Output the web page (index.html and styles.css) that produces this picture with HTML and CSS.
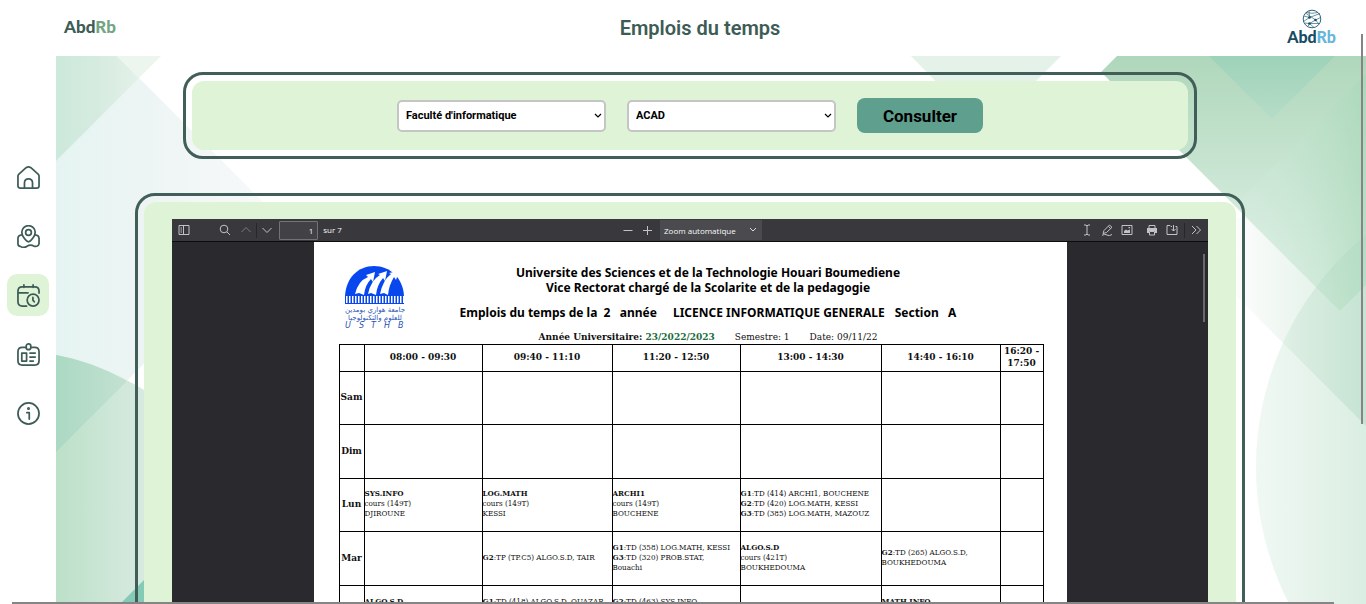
FILE: index.html
```html
<!DOCTYPE html>
<html lang="fr">
<head>
<meta charset="utf-8">
<title>Emplois du temps</title>
<link rel="stylesheet" href="styles.css">
</head>
<body>
<header class="topbar">
  <a class="wordmark" href="#">Abd<span>Rb</span></a>
  <h1>Emplois du temps</h1>
  <a class="brand" href="#">
    <svg width="20" height="20" viewBox="0 0 20 20" fill="none" stroke="#2d647c" stroke-width="1" aria-hidden="true">
      <circle cx="10" cy="10" r="8.8"/>
      <path d="M2 7 7.5 8.5 18 4.5M7.5 8.5 7 1.8M3.5 4 13.5 11 18.5 8.5M1.5 12.500 7.500 8.500M13.500 11 7.500 14.500 2.500 14M7.500 14.500 12 18.500M7.500 14.500 17.500 14.500M13.500 11 17 15M4 3.500Q10 5 16 3.500M7.500 14.500 6 17.500" stroke-width=".7"/>
      <g fill="#174c63" stroke="none"><circle cx="7.500" cy="8.500" r="1.300"/><circle cx="13.500" cy="11" r="1.300"/><circle cx="7.500" cy="14.500" r="1.300"/></g>
    </svg>
    <span class="brand-name">Abd<span>Rb</span></span>
  </a>
</header>
<div class="shell">
  <nav class="sidebar" aria-label="Navigation">
    <a href="#" aria-label="Accueil"><svg viewBox="0 0 24 24"><path d="M1 10.500Q1 9.300 2 8.400L9.500 1.800Q12 .2 14.500 1.800L22 8.400Q23 9.300 23 10.500V20.500Q23 23 20.500 23H3.500Q1 23 1 20.500ZM7.800 23V17.500Q8 13.500 12 13.500T16.200 17.500V23"/></svg></a>
    <a href="#" aria-label="Plan"><svg viewBox="0 0 24 24"><path d="M12 17.500C10 17.500 5 12 5 7.500A7 6.800 0 0 1 19 7.500C19 12 14 17.500 12 17.500Z"/><circle cx="12" cy="7.800" r="3"/><path d="M5.200 10.200Q1 10.500 1 14V19.500Q1 22 3.500 22.300Q7 24.500 10 22.500Q14 20 17.500 22Q22.500 23 23 19.500V14Q23 10.500 18.800 10.200"/></svg></a>
    <a class="active" href="#" aria-label="Emplois du temps" aria-current="page"><svg viewBox="0 0 24 24"><path d="M10 23H5.500Q1 23 1 18.500V7.500Q1 3 5.500 3H18.500Q23 3 23 7.500V9.500M1 9.200H11.500M7.200 1V3.500M16.800 1V3.500"/><circle cx="16.800" cy="16.800" r="6.200"/><path d="M16.600 14V16.800L18 18.500"/></svg></a>
    <a href="#" aria-label="Carte"><svg viewBox="0 0 24 24"><path d="M9.500 4.500H5.500Q1 4.500 1 9V18.500Q1 23 5.500 23H18.500Q23 23 23 18.500V9Q23 4.500 18.500 4.500H14.500"/><rect x="9.600" y="1" width="4.800" height="6" rx="2.400"/><path d="M5 10.500H10V18.800H5ZM13.500 10.500H19M13.500 14.700H19M13.500 18.800H17"/></svg></a>
    <a href="#" aria-label="Informations"><svg viewBox="0 0 24 24"><circle cx="12" cy="12" r="11"/><path d="M10.300 11.200H12.800V17.800"/><circle cx="12" cy="6.800" r=".7"/></svg></a>
  </nav>
  <main>
    <svg class="backdrop" viewBox="56 56 1310 548" preserveAspectRatio="none" aria-hidden="true">
      <defs>
        <linearGradient id="mist" gradientUnits="userSpaceOnUse" x1="56" x2="284" y1="0" y2="0"><stop stop-color="#e5f4f2"/><stop offset=".4" stop-color="#edf5f4"/><stop offset=".8" stop-color="#f5f8f8"/><stop offset="1" stop-color="#fbfcfc"/></linearGradient>
        <linearGradient id="mint" gradientUnits="userSpaceOnUse" x1="56" x2="139" y1="0" y2="0"><stop stop-color="#cce9db"/><stop offset=".5" stop-color="#d6ebe0"/><stop offset="1" stop-color="#e3f1e9"/></linearGradient>
        <linearGradient id="jade" gradientUnits="userSpaceOnUse" x1="56" x2="143" y1="0" y2="0"><stop stop-color="#abd9c3"/><stop offset="1" stop-color="#c9e3d5"/></linearGradient>
        <linearGradient id="sage" gradientUnits="userSpaceOnUse" x1="56" x2="143" y1="0" y2="0"><stop stop-color="#bce0c8"/><stop offset="1" stop-color="#d7eae0"/></linearGradient>
        <linearGradient id="ridge" gradientUnits="userSpaceOnUse" x1="0" x2="0" y1="56" y2="311"><stop stop-color="#afd7bb"/><stop offset="1" stop-color="#e8f5ee"/></linearGradient>
        <linearGradient id="vee" gradientUnits="userSpaceOnUse" x1="0" x2="0" y1="56" y2="119"><stop stop-color="#9ed2b9"/><stop offset="1" stop-color="#b6dcc8"/></linearGradient>
        <linearGradient id="veil" gradientUnits="userSpaceOnUse" x1="1240" x2="1366" y1="0" y2="0"><stop stop-color="#d8eee2" stop-opacity=".2"/><stop offset="1" stop-color="#a8d8b8" stop-opacity=".65"/></linearGradient>
        <linearGradient id="fade" gradientUnits="userSpaceOnUse" x1="1236" x2="1366" y1="0" y2="0"><stop stop-color="#fcfdfc"/><stop offset="1" stop-color="#d9ece1"/></linearGradient>
        <linearGradient id="disc" gradientUnits="userSpaceOnUse" x1="1256" x2="1366" y1="0" y2="0"><stop stop-color="#b5dcc3" stop-opacity=".2"/><stop offset="1" stop-color="#aed9c1" stop-opacity=".45"/></linearGradient>
      </defs>
      <path fill="#fff" d="M56 56H1366V604H56Z"/>
      <path fill="url(#mist)" d="M56 56H117L284 223 56 452Z"/>
      <path fill="url(#mint)" d="M56 56H117L139 78 56 161Z"/>
      <path fill="#edf5ef" d="M117 56H161L139 78Z"/>
      <path fill="url(#sage)" d="M56 355Q106 364 160 400V604H56Z"/>
      <path fill="url(#jade)" d="M56 355Q94 362 127 381L56 452Z"/>
      <path fill="#85cab7" d="M120 604 160 564V604Z"/>
      <path fill="#e4f2ea" d="M911 56H1061L985 132Z"/>
      <path fill="url(#fade)" d="M1190 250 1220 220 1366 200V426Z"/>
      <path fill="url(#ridge)" d="M1117 56 1101 72 1340 311 1366 285V56Z"/>
      <path fill="url(#vee)" d="M1209 56H1335L1272 119Z"/>
      <path fill="url(#veil)" d="M1366 74 1234 206 1340 311 1366 285Z"/>
      <circle fill="url(#disc)" cx="1556" cy="467" r="300"/>
    </svg>
    <div class="content">
      <form class="frame frame-search">
        <div class="panel search">
          <select aria-label="Faculté"><option>Faculté d'informatique</option></select>
          <select aria-label="Spécialité"><option>ACAD</option></select>
          <button type="button">Consulter</button>
        </div>
      </form>
      <section class="frame frame-document">
        <div class="panel document">
          <div class="viewer">
            <div class="toolbar">
              <div class="tools tools-left">
                <button class="tool panel-toggle" aria-label="Panneau"><svg viewBox="0 0 12 12"><path d="M1 1.500H11V10.500H1ZM5.500 1.500V10.500M2.500 4H4M2.500 6H4M2.500 8H4"/></svg></button>
                <button class="tool" aria-label="Rechercher"><svg viewBox="0 0 12 12"><circle cx="5" cy="5" r="3.800"/><path d="M8 8 11 11"/></svg></button>
                <span class="pager"><button class="tool dim" aria-label="Page précédente"><svg viewBox="0 0 12 12"><path d="M1.500 8 6 3.500 10.500 8"/></svg></button>
                <i class="split"></i>
                <button class="tool" aria-label="Page suivante"><svg viewBox="0 0 12 12"><path d="M1.500 4 6 8.500 10.500 4"/></svg></button></span>
                <label class="page-number"><input type="text" value="1" aria-label="Page"><span>sur 7</span></label>
              </div>
              <div class="tools tools-center">
                <button class="tool" aria-label="Zoom arrière"><svg viewBox="0 0 12 12"><path d="M1.500 6.500H10.500"/></svg></button>
                <button class="tool" aria-label="Zoom avant"><svg viewBox="0 0 12 12"><path d="M2 6.500H11M6.500 2V11"/></svg></button>
                <select class="zoom" aria-label="Zoom"><option>Zoom automatique</option></select>
              </div>
              <div class="tools tools-right">
                <button class="tool" aria-label="Texte"><svg viewBox="0 0 12 12"><path d="M3 1H5L6 2 7 1H9M6 2V10M3 11H5L6 10 7 11H9"/></svg></button>
                <button class="tool" aria-label="Dessiner"><svg viewBox="0 0 12 12"><path d="M2 9.500 3 6.500 8.500 1 11 3.300 5.500 8.500 2 9.500M7.500 2.500 9.500 4.500M1 11.300Q4 9.500 6 11T11 10.500"/></svg></button>
                <button class="tool" aria-label="Image"><svg viewBox="0 0 12 12"><path d="M1 1.500H11V10.500H1Z"/><path class="solid" d="M3 9V7L5 5.500 6.500 6.500 9 5.500V9ZM7.500 3H9V4.300H7.500Z"/></svg></button>
                <button class="tool push" aria-label="Imprimer"><svg viewBox="0 0 12 12"><path class="solid" d="M1 4H11V9H9V7H3V9H1Z"/><path d="M3 4V1.500H9V4M3.500 7.500H8.500V11H3.500Z"/></svg></button>
                <button class="tool" aria-label="Enregistrer"><svg viewBox="0 0 12 12"><path d="M6 2.500H5L4 1.500H1V10.500H11V2.500H9.500M7.500 1V7M5.500 5 7.500 7 9.500 5"/></svg></button>
                <i class="split"></i>
                <button class="tool" aria-label="Outils"><svg viewBox="0 0 12 12"><path d="M2 2 6 6 2 10M6.500 2 10.500 6 6.500 10"/></svg></button>
              </div>
            </div>
            <div class="canvas">
              <article class="sheet">
                <div class="sheet-head">
                  <svg class="crest" viewBox="0 0 64 66" aria-label="USTHB">
                    <path fill="#0847ee" d="M2 32C3 14 15 2 31 2S60 14 61 32V40H2Z"/>
                    <path fill="#fff" d="M12 30Q15 17 25 13L23 11 32 8 30 18 28 15Q22 21 21 31L16 29ZM25 30Q28 16 37 11L35 10 44 7 42 17 40 14Q34 21 33 31L28 29ZM37 30Q40 16 48 10L46 9 56 7 53 16 51 13Q46 21 45 31L41 29Z"/>
                    <path stroke="#fff" stroke-width="7" stroke-dasharray="1.500 1.500" d="M3 35.500H61"/>
                    <g fill="#2853b8" text-anchor="middle" font-size="7"><text x="32" y="48">جامعة هواري بومدين</text><text x="32" y="56">للعلوم والتكنولوجيا</text></g>
                    <g class="crest-name"><text x="2" y="64">U</text><text x="16" y="64">S</text><text x="28" y="64">T</text><text x="41" y="64">H</text><text x="55" y="64">B</text></g>
                  </svg>
                  <div class="titles">
                    <h2>Universite des Sciences et de la Technologie Houari Boumediene<br>Vice Rectorat chargé de la Scolarite et de la pedagogie</h2>
                    <h3>Emplois du temps de la&nbsp; 2 &nbsp; année<span>LICENCE INFORMATIQUE GENERALE</span>Section &nbsp; A</h3>
                    <p><b>Année Universitaire: <em>23/2022/2023</em></b><span>Semestre: 1</span><span>Date: 09/11/22</span></p>
                  </div>
                </div>
                <table>
                  <colgroup><col class="c-day"><col class="c-1"><col class="c-2"><col class="c-3"><col class="c-4"><col class="c-5"><col class="c-6"></colgroup>
                  <thead><tr><td></td><th>08:00 - 09:30</th><th>09:40 - 11:10</th><th>11:20 - 12:50</th><th>13:00 - 14:30</th><th>14:40 - 16:10</th><th>16:20 - 17:50</th></tr></thead>
                  <tbody>
                    <tr><th>Sam</th><td></td><td></td><td></td><td></td><td></td><td></td></tr>
                    <tr><th>Dim</th><td></td><td></td><td></td><td></td><td></td><td></td></tr>
                    <tr><th>Lun</th><td><b>SYS.INFO</b><br>cours (149T)<br>DJIROUNE</td><td><b>LOG.MATH</b><br>cours (149T)<br>KESSI</td><td><b>ARCHI1</b><br>cours (149T)<br>BOUCHENE</td><td><b>G1</b>:TD (414) ARCHI1, BOUCHENE<br><b>G2</b>:TD (420) LOG.MATH, KESSI<br><b>G3</b>:TD (385) LOG.MATH, MAZOUZ</td><td></td><td></td></tr>
                    <tr><th>Mar</th><td></td><td><b>G2</b>:TP (TP.C5) ALGO.S.D, TAIR</td><td><b>G1</b>:TD (358) LOG.MATH, KESSI<br><b>G3</b>:TD (320) PROB.STAT,<br>Bouachi</td><td><b>ALGO.S.D</b><br>cours (421T)<br>BOUKHEDOUMA</td><td><b>G2</b>:TD (265) ALGO.S.D,<br>BOUKHEDOUMA</td><td></td></tr>
                    <tr class="cut"><th></th><td><b>ALGO.S.D</b></td><td><b>G1</b>:TD (418) ALGO.S.D, OUAZAR</td><td><b>G2</b>:TD (463) SYS.INFO</td><td></td><td><b>MATH.INFO</b></td><td></td></tr>
                  </tbody>
                </table>
              </article>
              <i class="viewer-thumb"></i>
            </div>
          </div>
        </div>
      </section>
    </div>
  </main>
</div>
<i class="thumb-y"></i>
<i class="thumb-x"></i>
</body>
</html>
```
FILE: styles.css
```css
* { box-sizing: border-box; }
body {
  margin: 0;
  height: 100vh;
  display: flex;
  flex-direction: column;
  overflow: hidden;
  position: relative;
  background: #fff;
  font-family: Roboto, sans-serif;
  color: #3d5c55;
}
a { color: inherit; text-decoration: none; }
button, select, input { font-family: inherit; margin: 0; }

.topbar {
  flex: none;
  height: 56px;
  display: grid;
  grid-template-columns: 1fr auto 1fr;
  align-items: center;
  padding: 0 30px 0 64px;
}
.topbar h1 { margin: 0; font-size: 20px; font-weight: 600; line-height: 24px; }
.wordmark { padding-bottom: 2px; font: 900 17px/20px Lato, sans-serif; color: #3d5c55; }
.wordmark span { color: #73a583; }
.brand { justify-self: end; padding-bottom: 3px; display: flex; flex-direction: column; align-items: center; }
.brand-name { font: 900 16px/16px Lato, sans-serif; color: #174c66; }
.brand-name span { color: #67b5da; }

.shell { flex: 1; min-height: 0; display: flex; }
.sidebar {
  flex: none;
  width: 56px;
  padding-top: 100px;
  display: flex;
  flex-direction: column;
  align-items: center;
  gap: 17px;
}
.sidebar a {
  width: 42px;
  height: 42px;
  border-radius: 10px;
  display: grid;
  place-items: center;
}
.sidebar .active { background: #dff3d7; }
.sidebar svg {
  width: 23px;
  height: 23px;
  fill: none;
  stroke: #3d5c55;
  stroke-width: 1.8;
  stroke-linecap: round;
  stroke-linejoin: round;
}

main { flex: 1; min-width: 0; position: relative; overflow: hidden; }
.backdrop { position: absolute; inset: 0; width: 100%; height: 100%; }
.content {
  position: relative;
  padding: 16px 42px 0 0;
  display: flex;
  flex-direction: column;
  align-items: center;
  gap: 34px;
}
.frame { border: 3px solid #415f58; border-radius: 20px; padding: 6px; }
.frame-search { width: 80%; }
.frame-document { width: 87.5%; }
.panel { background: #dff3d7; border-radius: 12px; }
.search {
  padding: 17px;
  display: flex;
  align-items: center;
  justify-content: center;
  gap: 21px;
}
.search select {
  appearance: none;
  width: 209px;
  height: 32px;
  padding: 0 7px;
  border: 2px solid #c5c5c5;
  border-radius: 5px;
  background: #fff url("data:image/svg+xml,%3Csvg xmlns='http://www.w3.org/2000/svg' width='8' height='6'%3E%3Cpath d='M1 1l3 3 3-3' fill='none' stroke='%23000' stroke-width='1.2'/%3E%3C/svg%3E") no-repeat right 2px center;
  color: #000;
  font-size: 11px;
  font-weight: 700;
}
.search button {
  width: 126px;
  height: 35px;
  border: 0;
  border-radius: 8px;
  background: #5f9f8d;
  color: #000;
  font-size: 17px;
  font-weight: 700;
}

.document { padding: 17px 28px; }
.viewer { background: #2a2a2e; }
.toolbar {
  height: 23px;
  padding: 0 6px;
  display: grid;
  grid-template-columns: 1fr auto 1fr;
  align-items: center;
  background: #38383d;
  border-bottom: 1px solid #0c0c0d;
  color: #f9f9fa;
  font: 8px/12px "Open Sans", sans-serif;
}
.tools, .pager, .page-number { display: flex; align-items: center; }
.tools-center { gap: 7px; padding-left: 4px; }
.tools-right { justify-content: flex-end; gap: 8px; }
.tools-right .split { margin: 0 -3px 0 -2px; }
.panel-toggle { margin-right: 29px; }
.pager { gap: 4px; margin: 0 6px 0 9px; }
.page-number { gap: 5px; }
.tool { width: 12px; height: 12px; padding: 0; border: 0; background: none; }
.tool svg { display: block; width: 12px; height: 12px; fill: none; stroke: #c3c3c5; stroke-width: 1; }
.tool .solid { fill: #c3c3c5; stroke: none; }
.dim { opacity: .5; }
.push { margin-left: 5px; }
.split { width: 1px; height: 15px; background: #27272b; }
.page-number input {
  width: 39px;
  height: 19px;
  padding: 0 4px;
  border: 1px solid #737377;
  border-radius: 1px;
  background: #414146;
  color: #f9f9fa;
  font-size: 8px;
  text-align: right;
}
.zoom {
  appearance: none;
  width: 102px;
  height: 20px;
  padding: 0 4px;
  border: 0;
  background: #4a4a4f url("data:image/svg+xml,%3Csvg xmlns='http://www.w3.org/2000/svg' width='8' height='6'%3E%3Cpath d='M1 1l3 3 3-3' fill='none' stroke='%23ddd'/%3E%3C/svg%3E") no-repeat right 5px center;
  color: #f9f9fa;
  font-size: 8px;
}
.canvas { position: relative; display: flex; justify-content: center; }
.viewer-thumb { position: absolute; top: 12px; right: 3px; width: 2px; height: 68px; background: #69696c; }
.sheet {
  width: 753px;
  padding: 22px 24px 30px 25px;
  background: #fff;
  color: #111;
  font-family: "DejaVu Serif", serif;
}
.sheet-head { display: flex; }
.crest { flex: none; width: 68px; height: 66px; margin-left: 2px; font-family: "DejaVu Sans", sans-serif; }
.crest-name { fill: #2853b8; font-size: 8px; font-style: italic; }
.titles { flex: 1; padding-right: 35px; text-align: center; white-space: nowrap; }
.titles h2, .titles h3 { margin: 0; color: #000; font: 700 12px/15px "Noto Sans", sans-serif; }
.titles h2 { padding-top: 1px; }
.titles h3 { padding-top: 10px; }
.titles h3 span { margin: 0 10px 0 16px; }
.titles p { margin: 12px 0 1px; font-size: 9px; line-height: 11px; }
.titles p span { margin-left: 20px; }
.titles em { color: #1c6e3c; font-style: normal; }
table {
  width: 100%;
  table-layout: fixed;
  border-collapse: collapse;
  font-family: "DejaVu Serif Condensed", "DejaVu Serif", serif;
  font-size: 8px;
  line-height: 10px;
}
th { font: 700 9px/12px "DejaVu Serif", serif; }
td, th { padding: 0 0 2px; border: 1px solid #000; white-space: nowrap; }
td b { line-height: 8px; }
thead th:last-child { white-space: normal; }
thead tr { height: 26px; }
tbody tr { height: 53px; }
tbody tr:nth-child(even) { height: 54px; }
.cut td { padding-top: 11px; vertical-align: top; }
.c-day { width: 25px; }
.c-1 { width: 118px; }
.c-2 { width: 130px; }
.c-3 { width: 128px; }
.c-4 { width: 141px; }
.c-5 { width: 119px; }
.c-6 { width: 43px; }

.thumb-y { position: absolute; top: 34px; right: 3px; width: 2px; height: 390px; background: #858585; }
.thumb-x { position: absolute; left: 12px; right: 32px; bottom: 0; height: 2px; background: #858585; }
```
